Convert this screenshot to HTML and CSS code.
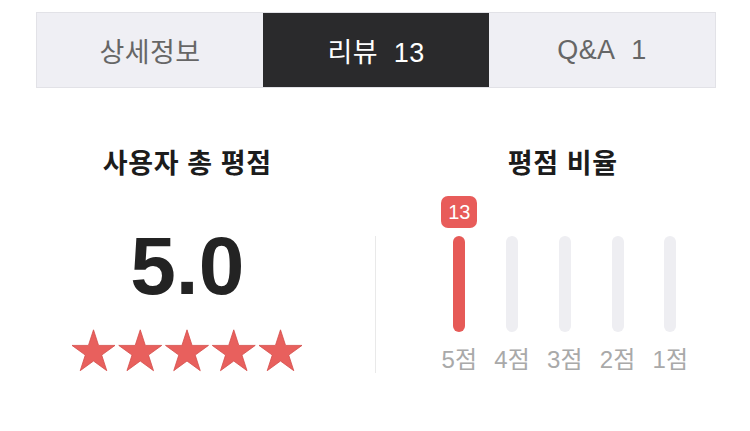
FILE: index.html
```html
<!DOCTYPE html>
<html lang="ko">
<head>
<meta charset="utf-8">
<link rel="stylesheet" href="styles.css">
</head>
<body>
<div class="tabs">
  <div class="tab">상세정보</div>
  <div class="tab active">리뷰&nbsp;&nbsp;13</div>
  <div class="tab">Q&amp;A&nbsp;&nbsp;1</div>
</div>
<div class="summary">
  <div class="col">
    <div class="title">사용자 총 평점</div>
    <div class="score">5.0</div>
    <svg class="stars" width="234" height="44" viewBox="0 0 234 44">
      <defs>
        <polygon id="star" points="0,-22.6 5.07,-6.98 21.49,-6.98 8.21,2.67 13.28,18.28 0,8.63 -13.28,18.28 -8.21,2.67 -21.49,-6.98 -5.07,-6.98" fill="#e8605d" stroke="#d44d4a" stroke-width="0.8" stroke-linejoin="round"/>
      </defs>
      <use href="#star" x="23.5" y="23.4"/>
      <use href="#star" x="70.25" y="23.4"/>
      <use href="#star" x="117" y="23.4"/>
      <use href="#star" x="163.75" y="23.4"/>
      <use href="#star" x="210.5" y="23.4"/>
    </svg>
  </div>
  <div class="divider"></div>
  <div class="col">
    <div class="title">평점 비율</div>
    <div class="chart">
      <div class="bar-col">
        <div class="badge-slot"><span class="badge">13</span></div>
        <div class="bar filled"></div>
        <div class="label">5점</div>
      </div>
      <div class="bar-col">
        <div class="badge-slot"></div>
        <div class="bar"></div>
        <div class="label">4점</div>
      </div>
      <div class="bar-col">
        <div class="badge-slot"></div>
        <div class="bar"></div>
        <div class="label">3점</div>
      </div>
      <div class="bar-col">
        <div class="badge-slot"></div>
        <div class="bar"></div>
        <div class="label">2점</div>
      </div>
      <div class="bar-col">
        <div class="badge-slot"></div>
        <div class="bar"></div>
        <div class="label">1점</div>
      </div>
    </div>
  </div>
</div>
</body>
</html>
```

FILE: styles.css
```css
* { box-sizing: border-box; }
html, body {
  margin: 0;
  padding: 0;
  background: #ffffff;
  font-family: "Liberation Sans", "Noto Sans CJK KR", sans-serif;
}
.tabs {
  display: flex;
  margin: 12px 34px 0 36px;
  height: 76px;
  border: 1px solid #e2e2e7;
}
.tab {
  flex: 1;
  display: flex;
  align-items: center;
  justify-content: center;
  background: #efeff4;
  color: #666666;
  font-size: 27px;
  letter-spacing: 0.4px;
}
.tab.active {
  background: #2a2a2c;
  color: #ffffff;
}
.summary {
  display: flex;
  align-items: flex-start;
  padding-top: 61px;
}
.col {
  flex: 1;
  display: flex;
  flex-direction: column;
  align-items: center;
}
.title {
  font-size: 27px;
  line-height: 30px;
  font-weight: bold;
  letter-spacing: 0.6px;
  color: #1c1c1c;
}
.score {
  margin-top: 47px;
  font-size: 82px;
  line-height: 80px;
  font-weight: bold;
  color: #232323;
}
.stars {
  display: block;
  margin-top: 23px;
}
.divider {
  width: 1px;
  height: 137px;
  margin-top: 87px;
  background: #e9e9e9;
}
.chart {
  display: flex;
  margin-top: 17px;
  padding-left: 4px;
}
.bar-col {
  width: 52.75px;
  display: flex;
  flex-direction: column;
  align-items: center;
}
.badge-slot {
  height: 32px;
  display: flex;
  justify-content: center;
}
.badge {
  width: 36px;
  height: 32px;
  border-radius: 7px;
  background: #e85c5a;
  color: #ffffff;
  font-size: 20px;
  line-height: 32px;
  text-align: center;
}
.bar {
  margin-top: 8px;
  width: 12px;
  height: 96px;
  border-radius: 6px;
  background: #eeeef2;
}
.bar.filled {
  background: #e65a57;
}
.label {
  margin-top: 16px;
  font-size: 24px;
  line-height: 24px;
  color: #a9a9a9;
  white-space: nowrap;
}
```
